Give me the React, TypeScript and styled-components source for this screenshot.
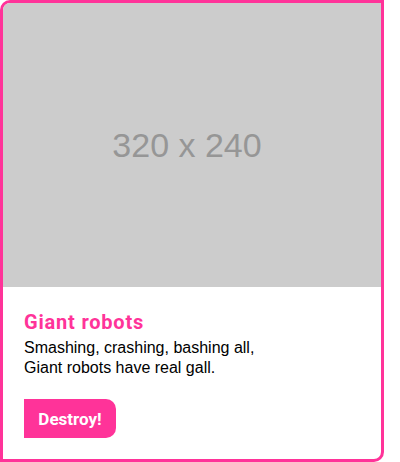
import React from "react";
import styled, { createGlobalStyle } from "styled-components";

const Global = createGlobalStyle`
  html, body { margin: 0; padding: 0; background: #fff; }
  body { font-family: "Liberation Sans", Arial, sans-serif; }
`;

const Card = styled.div`
  box-sizing: border-box;
  width: 384px;
  height: 462px;
  border: 3px solid #ff3399;
  border-radius: 10px 0 10px 0;
  overflow: hidden;
  display: flex;
  flex-direction: column;
  background: #fff;
`;

const Placeholder = styled.div`
  width: 378px;
  height: 284px;
  background: #cccccc;
  display: flex;
  align-items: center;
  justify-content: center;
  padding-right: 10px;
  box-sizing: border-box;
  color: #969696;
  font-family: "Liberation Sans", Arial, sans-serif;
  font-size: 34px;
`;

const Body = styled.div`
  padding: 23px 21px 21px;
  display: flex;
  flex-direction: column;
  align-items: flex-start;
`;

const Title = styled.h2`
  margin: 0 0 4px;
  font-family: Roboto, sans-serif;
  font-weight: 700;
  font-size: 20px;
  line-height: 24px;
  letter-spacing: 0.8px;
  color: #ff3399;
`;

const Text = styled.p`
  margin: 0 0 21px;
  font-family: "Liberation Sans", Arial, sans-serif;
  font-size: 16px;
  line-height: 20px;
  color: #000;
`;

const Button = styled.button`
  box-sizing: border-box;
  height: 39px;
  width: 92px;
  border: none;
  padding: 0;
  background: #ff3399;
  color: #fff;
  border-radius: 0 10px 10px 0;
  font-family: Roboto, sans-serif;
  font-weight: 700;
  font-size: 17px;
  cursor: pointer;
`;

export default function App() {
  return (
    <>
      <Global />
      <Card>
        <Placeholder>320 x 240</Placeholder>
        <Body>
          <Title>Giant robots</Title>
          <Text>
            Smashing, crashing, bashing all,
            <br />
            Giant robots have real gall.
          </Text>
          <Button>Destroy!</Button>
        </Body>
      </Card>
    </>
  );
}
